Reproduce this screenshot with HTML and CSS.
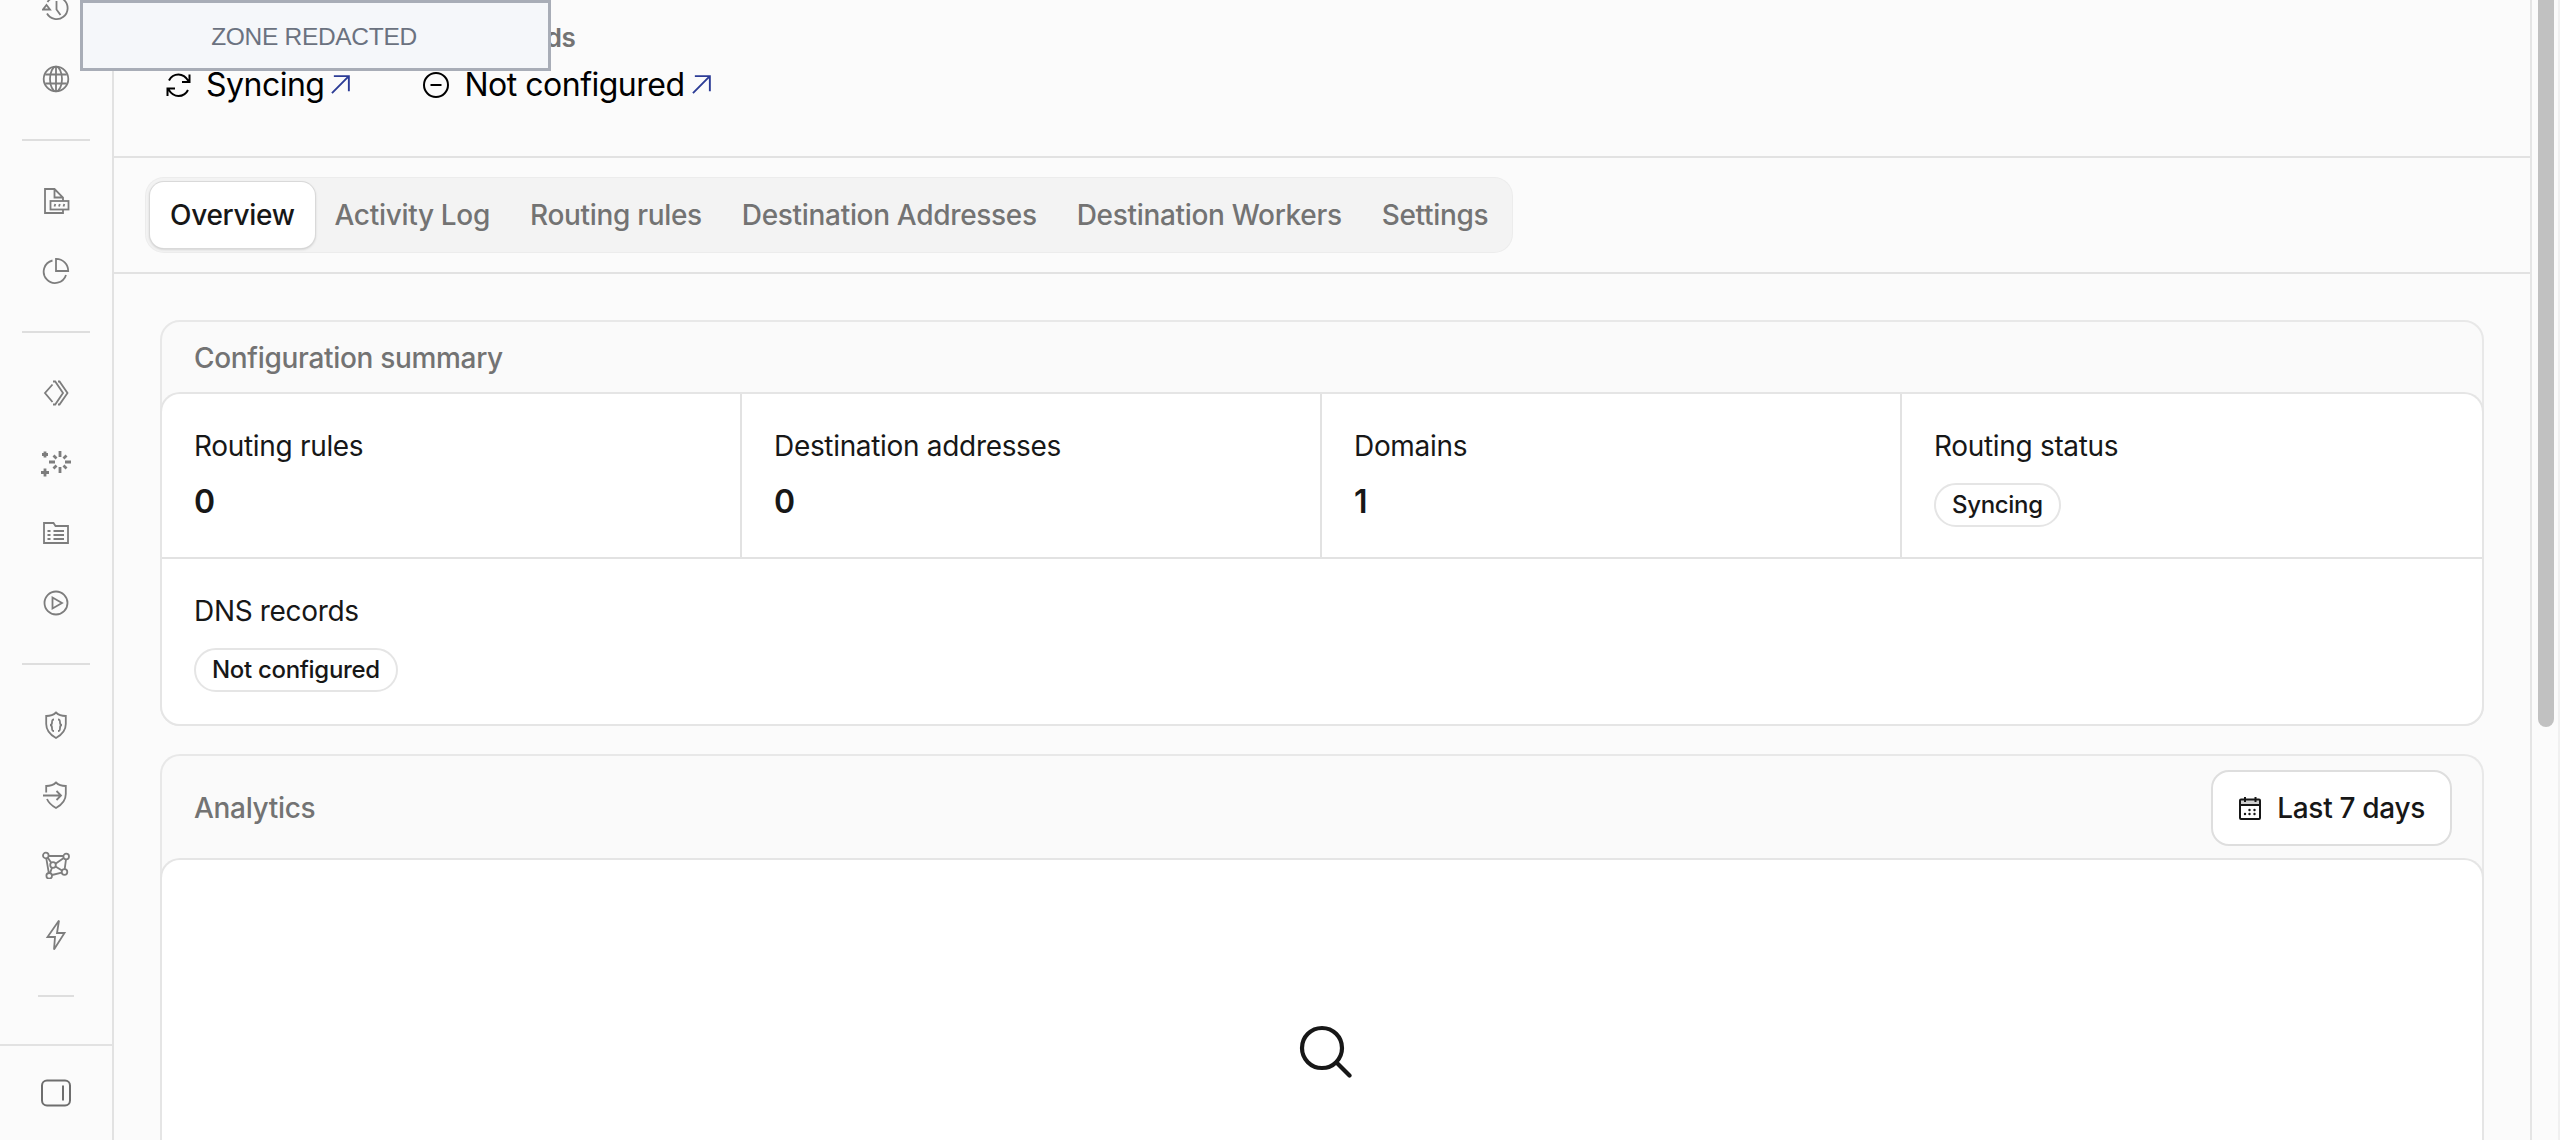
FILE: index.html
```html
<!DOCTYPE html>
<html lang="en">
<head>
    <meta charset="UTF-8">
    <meta name="viewport" content="width=device-width, initial-scale=1.0">
    <title>Email Routing</title>
    <link rel="stylesheet" href="styles.css">
</head>
<body>
    <aside class="sidebar">
        <nav class="side-nav">
            <a class="side-item"><svg class="icon" viewBox="0 0 28 28"><path d="M5 18.500A11 11 0 1 0 5.500 7"/><path d="M1 14.500h7l-3.500-4.500zM14.500 6v8.500l4 5.500"/></svg></a>
            <a class="side-item"><svg class="icon" viewBox="0 0 28 28"><circle cx="14" cy="14" r="12.300"/><ellipse cx="14" cy="14" rx="6" ry="12.300"/><path d="M14 1.700v24.600M3.300 9.500h21.400M3.300 18.500h21.400"/></svg></a>
            <hr class="side-line">
            <a class="side-item"><svg class="icon" viewBox="0 0 28 28"><path d="M21 14V10.500L12.500 2H3v24h18v-3M12.500 2v8.500H21"/><rect x="8.500" y="14" width="18" height="8.500"/><path d="M12.500 19.500l.8-2.500M17 19.500l.8-2.500M21.500 19.500l.8-2.500"/></svg></a>
            <a class="side-item"><svg class="icon" viewBox="0 0 28 28"><path d="M14 1.800A12 12 0 0 1 26.200 14H14z"/><path d="M10.500 3.500A11.400 11.400 0 1 0 24 18"/></svg></a>
            <hr class="side-line">
            <a class="side-item"><svg class="icon" viewBox="0 0 28 28"><path d="M10.500 5.500L3 14l7.500 9M11 2.500h2.200L21 14l-7.800 11.500H11M16 2.500h1.500L25.500 14l-8 11.500H16"/></svg></a>
            <a class="side-item"><svg class="icon icon-spark" viewBox="0 1 32 32"><path d="M20 5v6M20 21v6M9 16h6M25 16h6M13.500 9.500l3 3M26.500 9.500l-3 3M13.500 22.500l3-3M26.500 22.500l-3-3"/><path d="M5 5.500v6M2 8.500h6M5 22.500v8M1 26.500h8"/></svg></a>
            <a class="side-item"><svg class="icon" viewBox="0 0 28 28"><path d="M2 4h9.500l2 3H26v17H2z"/><path d="M5.500 12h3M5.500 16h3M5.500 20h3M11.500 12H22M11.500 16H22M11.500 20H22"/></svg></a>
            <a class="side-item"><svg class="icon" viewBox="0 0 28 28"><circle cx="14" cy="14" r="11.500"/><path d="M10.500 8.500v11l9.500-5.500z"/></svg></a>
            <hr class="side-line">
            <a class="side-item"><svg class="icon" viewBox="0 0 28 28"><path d="M14 1.500c-2.500 2.500-6 3.500-9.800 3.500v8c0 6 3.500 10.500 9.800 14 6.300-3.500 9.800-8 9.800-14V5c-3.800 0-7.300-1-9.800-3.500z"/><path d="M12 8.500c-2 0-2 1-2 3s-.5 2.500-2 2.500c1.500 0 2 1 2 3s0 3 2 3M16 8.500c2 0 2 1 2 3s.5 2.500 2 2.500c-1.500 0-2 1-2 3s0 3-2 3"/></svg></a>
            <a class="side-item"><svg class="icon" viewBox="0 0 28 28"><path d="M4.200 11.500V5c3.800 0 7.300-1 9.800-3.500C16.500 4 20 5 23.800 5v8c0 6-3.500 10.500-9.800 14-4.500-2.500-7.500-5.500-9-9"/><path d="M1 14.500h18M14.500 10l4.500 4.500-4.500 4.500"/></svg></a>
            <a class="side-item"><svg class="icon" viewBox="0 0 28 28"><circle cx="3.800" cy="4.500" r="2.800"/><circle cx="24.200" cy="5.500" r="2.800"/><circle cx="11" cy="14" r="2.800"/><circle cx="22.500" cy="21" r="2.800"/><circle cx="7.200" cy="24.800" r="2.800"/><path d="M6.600 5h14.800M4.300 7.300l2.500 14.700M24 8.300l-1.300 9.900M10 24l9.700-2.300M5.700 6.500l3.500 5.300M13.500 12.800l8.200-5.900M13.500 15.500l6.500 4M10 16.700l-2 5.400"/></svg></a>
            <a class="side-item"><svg class="icon icon-bolt" viewBox="0 0 28 32"><path d="M17 1.500L5.500 18H13l-1 12.500L22.500 14H15z"/></svg></a>
            <hr class="side-line short">
        </nav>
        <div class="side-footer">
            <svg class="icon-panel" viewBox="0 0 30 28"><rect x="1" y="1.500" width="28" height="25" rx="5"/><path d="M22 6.500v15"/></svg>
        </div>
    </aside>

    <main class="main">
        <section class="status-bar">
            <div class="status">
                <div class="status-label"></div>
                <div class="status-value">
                    <svg class="status-icon" viewBox="0 0 28 28"><path d="M5 9.500C7 5.500 10.500 3.500 14.500 3.500c4.500 0 7.500 2.500 10 6.500M25.500 3.500V11H18M24 19c-2 4-5.500 6-9.500 6-4.500 0-7.500-2.500-10-6.500M3.500 25v-7.500H11"/></svg>
                    <span>Syncing</span>
                    <svg class="arrow" viewBox="0 0 20 20"><path d="M1 19L19 1M3 1.200h15.800V17"/></svg>
                </div>
            </div>
            <div class="status">
                <div class="status-label">DNS records</div>
                <div class="status-value">
                    <svg class="status-icon" viewBox="0 0 28 28"><circle cx="14" cy="14" r="12"/><path d="M8.500 14h11"/></svg>
                    <span>Not configured</span>
                    <svg class="arrow" viewBox="0 0 20 20"><path d="M1 19L19 1M3 1.200h15.800V17"/></svg>
                </div>
            </div>
        </section>

        <section class="tab-bar">
            <div class="tabs">
                <a class="tab active">Overview</a>
                <a class="tab">Activity Log</a>
                <a class="tab">Routing rules</a>
                <a class="tab">Destination Addresses</a>
                <a class="tab">Destination Workers</a>
                <a class="tab">Settings</a>
            </div>
        </section>

        <section class="content">
            <div class="card">
                <div class="card-header">Configuration summary</div>
                <div class="card-body summary">
                    <div class="cell">
                        <div class="cell-label">Routing rules</div>
                        <div class="cell-number">0</div>
                    </div>
                    <div class="cell">
                        <div class="cell-label">Destination addresses</div>
                        <div class="cell-number">0</div>
                    </div>
                    <div class="cell">
                        <div class="cell-label">Domains</div>
                        <div class="cell-number">1</div>
                    </div>
                    <div class="cell">
                        <div class="cell-label">Routing status</div>
                        <span class="badge">Syncing</span>
                    </div>
                    <div class="cell wide">
                        <div class="cell-label">DNS records</div>
                        <span class="badge">Not configured</span>
                    </div>
                </div>
            </div>

            <div class="card analytics">
                <div class="card-header analytics-header">
                    <span>Analytics</span>
                    <button class="range-button">
                        <svg class="icon-calendar" viewBox="0 0 24 24"><path class="calendar-top" d="M2 3.500h20v5H2z"/><rect x="2" y="3.500" width="20" height="19.500" rx="1"/><path d="M2 9h20M7 1v5M17.500 1v5"/><path class="dots" d="M11.500 14h0M16.500 14h0M7 18h0M11.500 18h0M16.500 18h0"/></svg>
                        Last 7 days
                    </button>
                </div>
                <div class="card-body empty">
                    <svg class="icon-search" viewBox="0 0 60 56"><circle cx="30" cy="24" r="20"/><path d="M44.500 38.500L57.500 51.500"/></svg>
                </div>
            </div>
        </section>
    </main>

    <div class="scroll-track">
        <div class="scroll-thumb"></div>
    </div>

    <div class="redacted">ZONE REDACTED</div>
</body>
</html>
```

FILE: styles.css
```css
* {
    box-sizing: border-box;
}

body {
    display: flex;
    height: 1140px;
    margin: 0;
    overflow: hidden;
    position: relative;
    background-color: #fbfbfb;
    color: #171717;
    font-family: Inter, "Liberation Sans", sans-serif;
    font-size: 28px;
    letter-spacing: -0.32px;
}

svg {
    display: block;
    flex-shrink: 0;
    fill: none;
    stroke: currentColor;
    stroke-width: 2;
}

/* Sidebar */
.sidebar {
    display: flex;
    flex-direction: column;
    justify-content: space-between;
    flex-shrink: 0;
    width: 114px;
    border-right: 2px solid #e2e2e2;
    color: #7d7d7d;
}

.side-nav {
    margin-top: -26px;
}

.side-item {
    display: flex;
    align-items: center;
    justify-content: center;
    height: 70px;
}

.icon {
    width: 28px;
    height: 28px;
    stroke-width: 1.8;
}

.icon-spark {
    width: 32px;
    height: 32px;
    stroke-width: 2.8;
}

.icon-bolt {
    height: 32px;
}

.side-line {
    width: 68px;
    height: 2px;
    margin: 25px auto;
    border: none;
    background-color: #dedede;
}

.side-line.short {
    width: 36px;
}

.side-footer {
    display: flex;
    align-items: center;
    justify-content: center;
    height: 96px;
    border-top: 2px solid #e2e2e2;
    color: #6e6e6e;
}

.icon-panel {
    width: 30px;
    height: 28px;
}

/* Main column */
.main {
    display: flex;
    flex-direction: column;
    flex: 1;
    min-width: 0;
    border-right: 2px solid #e5e5e5;
}

.status-bar {
    display: flex;
    flex-shrink: 0;
    gap: 72px;
    height: 158px;
    padding: 17px 50px 0;
    border-bottom: 2px solid #e2e2e2;
}

.status-label {
    height: 40px;
    color: #737373;
    font-size: 26px;
    font-weight: 600;
    letter-spacing: -0.5px;
    line-height: 41px;
}

.status-value {
    display: flex;
    align-items: center;
    height: 55px;
    color: #000;
    font-size: 32px;
    letter-spacing: -0.5px;
}

.status-icon {
    width: 28px;
    height: 28px;
    margin-right: 14px;
}

.arrow {
    width: 19px;
    height: 19px;
    margin-left: 7px;
    color: #2c3c96;
}

.tab-bar {
    flex-shrink: 0;
    height: 116px;
    padding: 20px 32px;
    border-bottom: 2px solid #e2e2e2;
}

.tabs {
    display: inline-flex;
    height: 74px;
    padding: 4px;
    border-radius: 18px;
    background-color: #f3f3f3;
    box-shadow: 0 0 0 1px #ececec;
}

.tab {
    padding: 0 20px;
    border-radius: 14px;
    color: #737373;
    font-weight: 500;
    line-height: 66px;
}

.tab.active {
    background-color: #fff;
    color: #171717;
    box-shadow: 0 0 0 1px #d9d9d9, 0 1px 3px rgba(0, 0, 0, 0.25);
}

/* Cards */
.content {
    display: flex;
    flex-direction: column;
    flex: 1;
    gap: 28px;
    padding: 46px 46px 0;
}

.card {
    border: 2px solid #e8e8e8;
    border-radius: 20px;
    background-color: #fafafa;
}

.card-header {
    height: 70px;
    padding: 0 32px;
    color: #737373;
    font-weight: 500;
    line-height: 73px;
}

.card-body {
    margin-top: 2px;
    border-radius: 18px;
    background-color: #fff;
    box-shadow: 0 0 0 2px #e5e5e5;
}

.summary {
    display: grid;
    grid-template-columns: repeat(4, 1fr);
}

.cell {
    height: 165px;
    padding: 32px;
    border-right: 2px solid #e2e2e2;
    border-bottom: 2px solid #e2e2e2;
}

.cell:nth-child(4) {
    border-right: none;
}

.cell.wide {
    grid-column: 1 / -1;
    border: none;
}

.cell-label {
    line-height: 40px;
}

.cell-number {
    margin-top: 16px;
    font-size: 32px;
    font-weight: 600;
    line-height: 40px;
}

.badge {
    display: inline-block;
    height: 44px;
    margin-top: 17px;
    padding: 0 16px;
    border: 2px solid #e5e5e5;
    border-radius: 22px;
    font-size: 24px;
    font-weight: 500;
    line-height: 39px;
    vertical-align: top;
}

.analytics {
    display: flex;
    flex-direction: column;
    flex: 1;
    border-bottom: none;
    border-radius: 20px 20px 0 0;
}

.analytics-header {
    display: flex;
    align-items: center;
    justify-content: space-between;
    height: 102px;
    padding: 2px 30px 0 32px;
}

.range-button {
    display: flex;
    align-items: center;
    gap: 15px;
    height: 76px;
    padding: 0 25px;
    border: 2px solid #dedede;
    border-radius: 18px;
    background-color: #fff;
    color: #171717;
    font-family: inherit;
    font-size: 28px;
    font-weight: 500;
    letter-spacing: inherit;
}

.icon-calendar {
    width: 24px;
    height: 24px;
}

.icon-calendar .calendar-top {
    fill: #d0d0d0;
    stroke: none;
}

.icon-calendar .dots {
    stroke-width: 2.4;
    stroke-linecap: round;
}

.empty {
    flex: 1;
    padding-top: 164px;
    border-radius: 18px 18px 0 0;
}

.icon-search {
    width: 60px;
    height: 56px;
    margin: 0 auto;
    stroke-width: 4.2;
    stroke-linecap: round;
}

/* Scrollbar */
.scroll-track {
    flex-shrink: 0;
    width: 28px;
    padding-left: 6px;
    border-right: 2px solid #f0f0f0;
}

.scroll-thumb {
    width: 16px;
    height: 727px;
    border-radius: 0 0 8px 8px;
    background-color: #c1c1c1;
}

.redacted {
    position: absolute;
    top: 0;
    left: 80px;
    width: 471px;
    height: 71px;
    padding-right: 3px;
    border: 3px solid #a8adb7;
    background-color: #f5f7fa;
    color: #6b7280;
    font-family: "Liberation Sans", sans-serif;
    font-size: 24.5px;
    letter-spacing: -0.3px;
    line-height: 67px;
    text-align: center;
}
```
